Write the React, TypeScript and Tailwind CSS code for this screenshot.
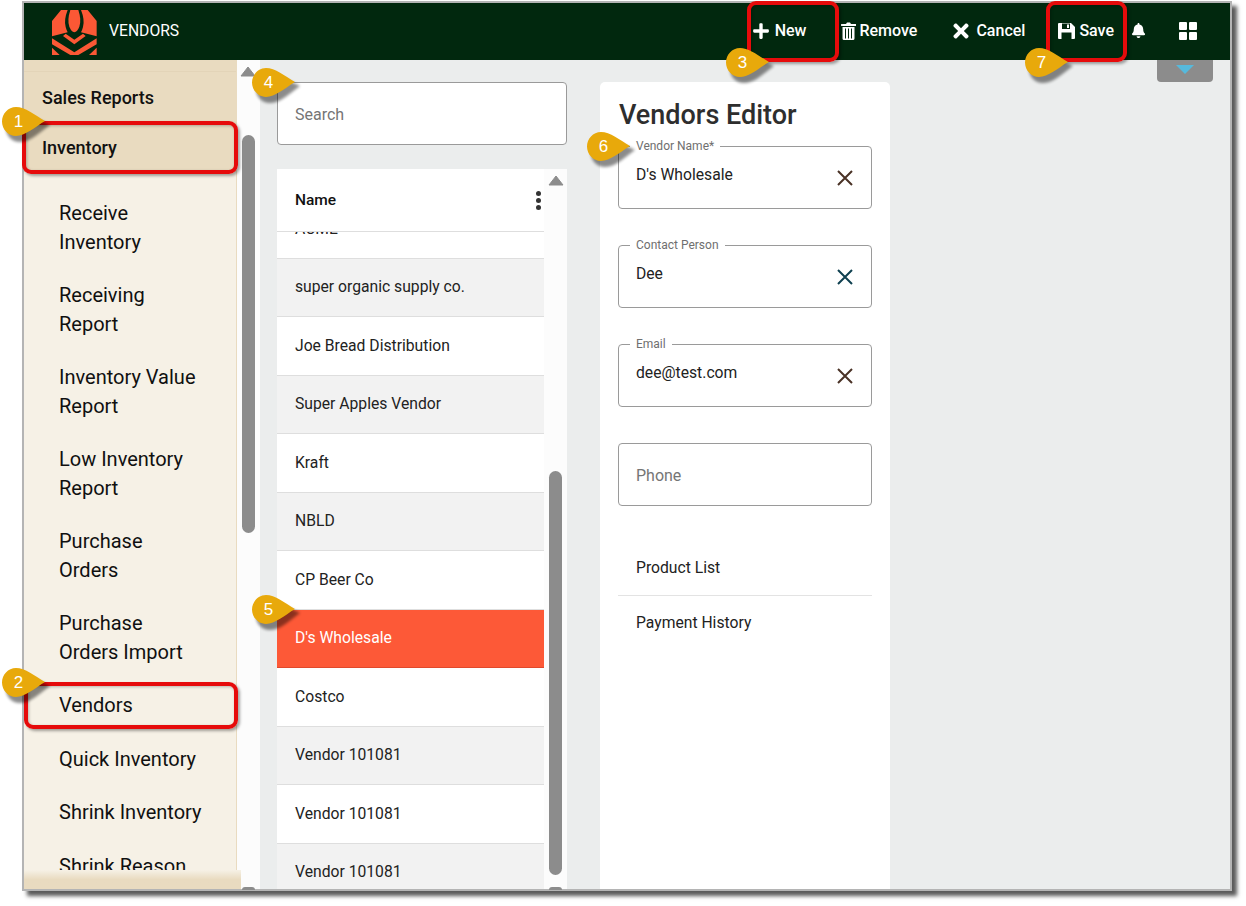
import React from "react";
import { FaPlus, FaTimes, FaBell } from "react-icons/fa";

function Logo() {
  return (
    <svg width="60" height="54" viewBox="0 0 180 162" className="ml-[21px] shrink-0" fill="#fb5835">
      <path d="M76 15 H100 Q110 45 103 65 Q97 80 88 82 Q79 80 73 65 Q66 45 76 15Z" />
      <path d="M48 15 H68 Q56 45 62 66 Q64 74 68 82 L21 94 V48Z" />
      <path d="M128 15 H108 Q120 45 114 66 Q112 74 108 82 L155 94 V48Z" />
      <path d="M62 86 L88 104 L114 86 L122 93 L88 118 L54 93Z" />
      <path d="M21 100 L88 142 L155 100 V118 L100 150 H76 L21 118Z" />
      <path d="M21 128 L44 150 H21Z" />
      <path d="M155 128 L132 150 H155Z" />
    </svg>
  );
}

function SaveIcon() {
  return (
    <svg width="17" height="16" viewBox="0 0 17 16" fill="#fff" className="shrink-0">
      <path
        fillRule="evenodd"
        d="M0 1 Q0 0 1 0 H13 L17 4 V15 Q17 16 16 16 H1 Q0 16 0 15Z M4 0.5 V6 H12 V0.5Z M3.5 9.5 V16 H13.5 V9.5Z"
      />
      <rect x="9" y="1.5" width="2" height="3.5" />
    </svg>
  );
}

function TrashIcon() {
  return (
    <svg width="15" height="18" viewBox="0 0 15 18" fill="#fff" className="shrink-0">
      <path d="M5 2 L6 0.5 H9 L10 2 H15 V4 H0 V2Z" />
      <path
        fillRule="evenodd"
        d="M1.5 5 H13.5 V16.5 Q13.5 18 12 18 H3 Q1.5 18 1.5 16.5Z M4 6.5 V16.5 H5 V6.5Z M7 6.5 V16.5 H8 V6.5Z M10 6.5 V16.5 H11 V6.5Z"
      />
    </svg>
  );
}

function TopAction({ icon, label, gap }: { icon: React.ReactNode; label: string; gap: string }) {
  return (
    <div className={`flex items-center text-[16px] text-white font-medium ${gap}`}>
      {icon}
      <span>{label}</span>
    </div>
  );
}

function Badge({ n, x, y }: { n: number; x: number; y: number }) {
  return (
    <div className="absolute z-30 w-[48px] h-[36px]" style={{ left: x, top: y }}>
      <svg width="52" height="38" viewBox="0 0 52 38" className="absolute left-0 top-0">
        <path d="M15 3 C24 3 34 9 45 14 C36 20 26 31 15 31 C7 31 1 25 1 17 C1 9 7 3 15 3Z" fill="#000" opacity="0.45" transform="translate(4 4)" className="blur-[1.5px]" />
        <path d="M15 0 C24 0 34 8 44 14 C34 20 24 29 15 29 C7 29 1 22 1 14.5 C1 7 7 0 15 0Z" fill="#e8a90b" />
      </svg>
      <span className="absolute left-0 top-0 w-[35px] h-[29px] flex items-center justify-center text-white text-[17px] font-['Liberation_Sans',sans-serif]">{n}</span>
    </div>
  );
}

function RedBox({ x, y, w, h }: { x: number; y: number; w: number; h: number }) {
  return (
    <div
      className="absolute z-20 border-[4.5px] border-[#e60b0b] rounded-[9px] shadow-[2px_2px_3px_rgba(0,0,0,0.35),inset_1px_1px_3px_rgba(0,0,0,0.25)]"
      style={{ left: x, top: y, width: w, height: h }}
    />
  );
}

function SideItem({ lines }: { lines: string[] }) {
  return (
    <div className="pl-[35px] py-[12px] text-[20px] leading-[29px] text-[#101010]">
      {lines.map((l) => (
        <div key={l}>{l}</div>
      ))}
    </div>
  );
}

function SideSingle({ label }: { label: string }) {
  return <div className="pl-[35px] h-[53.5px] pt-[12px] text-[20px] leading-[29px] text-[#101010]">{label}</div>;
}

function Triangle({ color = "#8c8c8c", cls = "" }: { color?: string; cls?: string }) {
  return (
    <svg width="16" height="11" viewBox="0 0 16 11" className={cls}>
      <path d="M8 1 L15 10 H1Z" fill={color} stroke={color} strokeLinejoin="round" />
    </svg>
  );
}

function Field({ label, value, xColor }: { label: string; value: string; xColor: string }) {
  return (
    <div className="relative h-[63px] border border-[#9a9a9a] rounded-[4px] pl-[17px] pt-[17px] text-[15.7px] leading-[21px] text-[#222]">
      <span className="absolute left-[11px] -top-[8px] bg-white px-[6px] text-[12px] leading-[14px] text-[#6f6f6f]">{label}</span>
      {value}
      <svg width="20" height="20" viewBox="0 0 20 20" className="absolute right-[16px] top-[21px]" stroke={xColor} strokeWidth="2" fill="none">
        <path d="M3 3 L17 17 M17 3 L3 17" />
      </svg>
    </div>
  );
}

const rows = [
  "ACME",
  "super organic supply co.",
  "Joe Bread Distribution",
  "Super Apples Vendor",
  "Kraft",
  "NBLD",
  "CP Beer Co",
  "D's Wholesale",
  "Costco",
  "Vendor 101081",
  "Vendor 101081",
  "Vendor 101081",
];

export default function App() {
  return (
    <div className="relative w-[1246px] h-[906px] bg-white overflow-hidden font-['Roboto',sans-serif] pl-[22px] pt-[1px]">
      <div className="w-[1210px] h-[890px] border-2 border-[#b4b4b4] shadow-[5px_5px_4px_rgba(0,0,0,0.65)] flex flex-col bg-[#ebeded]">
        <header className="h-[57px] shrink-0 bg-[#01280e] flex items-center">
          <Logo />
          <span className="ml-[4px] mb-[2px] text-[15.7px] text-white">VENDORS</span>
          <div className="ml-auto flex items-center pr-[33px] pb-[2px]">
            <TopAction gap="gap-[5px]" icon={<FaPlus className="text-[18px]" />} label="New" />
            <div className="ml-[35px]">
              <TopAction gap="gap-[3px]" icon={<TrashIcon />} label="Remove" />
            </div>
            <div className="ml-[33px]">
              <TopAction gap="gap-[4px]" icon={<FaTimes className="text-[22px]" />} label="Cancel" />
            </div>
            <div className="ml-[33px]">
              <TopAction gap="gap-[4px]" icon={<SaveIcon />} label="Save" />
            </div>
            <FaBell className="ml-[17px] text-white text-[15px]" />
            <svg width="18" height="18" viewBox="0 0 18 18" fill="#fff" className="ml-[33px]">
              <rect x="0" y="0" width="8" height="8" rx="1" />
              <rect x="10" y="0" width="8" height="8" rx="1" />
              <rect x="0" y="10" width="8" height="8" rx="1" />
              <rect x="10" y="10" width="8" height="8" rx="1" />
            </svg>
          </div>
        </header>
        <div className="flex flex-1 min-h-0">
          {/* sidebar */}
          <aside className="relative w-[213px] shrink-0 bg-[#f6f1e6] border-r border-[#e9dbc0] overflow-visible">
            <div className="h-[12px] bg-[#e9dbc0] border-b border-[#e3d4b8]" />
            <div className="bg-[#e9dbc0] text-[18px] font-medium text-[#111] pl-[18px]">
              <div className="h-[50px] leading-[51px]">Sales Reports</div>
              <div className="h-[50px] leading-[51px]">Inventory</div>
            </div>
            <div className="pt-[15px] h-[707px] overflow-hidden">
              <SideItem lines={["Receive", "Inventory"]} />
              <SideItem lines={["Receiving", "Report"]} />
              <SideItem lines={["Inventory Value", "Report"]} />
              <SideItem lines={["Low Inventory", "Report"]} />
              <SideItem lines={["Purchase", "Orders"]} />
              <SideItem lines={["Purchase", "Orders Import"]} />
              <SideSingle label="Vendors" />
              <SideSingle label="Quick Inventory" />
              <SideSingle label="Shrink Inventory" />
              <SideSingle label="Shrink Reason" />
            </div>
            <div className="absolute left-0 bottom-0 w-[217px] h-[19px] bg-gradient-to-b from-[#f6f1e6] via-[#e9dbc0] to-[#e9dbc0] z-10" />
          </aside>
          {/* sidebar scrollbar */}
          <div className="relative w-[23px] shrink-0 bg-[#fcfcfc]">
            <Triangle cls="absolute left-[3px] top-[6px]" />
            <div className="absolute left-[5px] top-[75px] w-[13px] h-[398px] bg-[#8c8c8c] rounded-[7px]" />
            <div className="absolute left-[5px] -bottom-[1px] w-[13px] h-[3px] bg-[#8c8c8c] rounded-t-[3px]" />
          </div>
          {/* list column */}
          <div className="w-[290px] ml-[17px] mt-[22px] shrink-0 flex flex-col">
            <div className="h-[63px] bg-white border border-[#9a9a9a] rounded-[4px] flex items-center pl-[17px] pt-[2px] text-[16px] text-[#757575] shrink-0">
              Search
            </div>
            <div className="mt-[24px] flex-1 min-h-0 flex bg-white">
              <div className="flex-1 min-w-0 flex flex-col">
                <div className="h-[63px] shrink-0 border-b border-[#dedede] flex items-center justify-between pl-[18px] pt-[2px] text-[15.5px] font-medium text-[#111] relative z-10 bg-white">
                  Name
                  <span className="flex flex-col gap-[2px] mr-[3px] -mt-[2px]">
                    <i className="block w-[5px] h-[5px] rounded-full bg-[#333]" />
                    <i className="block w-[5px] h-[5px] rounded-full bg-[#333]" />
                    <i className="block w-[5px] h-[5px] rounded-full bg-[#333]" />
                  </span>
                </div>
                <div className="flex-1 min-h-0 overflow-hidden">
                  <div className="-mt-[32px]">
                    {rows.map((r, i) => {
                      const active = r === "D's Wholesale";
                      return (
                        <div
                          key={i}
                          className={`h-[58.5px] flex items-center pl-[18px] text-[15.7px] border-b ${
                            active
                              ? "bg-[#fd5937] text-white border-[#e0492c]"
                              : i % 2 === 1
                                ? "bg-[#f2f2f2] text-[#222] border-[#dedede]"
                                : "bg-white text-[#222] border-[#dedede]"
                          }`}
                        >
                          {r}
                        </div>
                      );
                    })}
                  </div>
                </div>
              </div>
              <div className="relative w-[23px] shrink-0 bg-[#fcfcfc]">
                <Triangle cls="absolute left-[4px] top-[6px]" />
                <div className="absolute left-[5px] top-[302px] w-[13px] h-[404px] bg-[#8c8c8c] rounded-[7px]" />
                <div className="absolute left-[5px] -bottom-[1px] w-[13px] h-[3px] bg-[#8c8c8c] rounded-t-[3px]" />
              </div>
            </div>
          </div>
          {/* editor */}
          <div className="w-[290px] ml-[33px] mt-[22px] shrink-0 bg-white rounded-t-[5px] px-[18px] pt-[16px]">
            <h1 className="text-[27px] leading-[34px] font-medium text-[#2e2e2e] pl-[1px]">Vendors Editor</h1>
            <div className="mt-[14px] flex flex-col gap-[36px]">
              <Field label="Vendor Name*" value="D's Wholesale" xColor="#4a3226" />
              <Field label="Contact Person" value="Dee" xColor="#0f4050" />
              <Field label="Email" value="dee@test.com" xColor="#4a3226" />
              <div className="h-[63px] border border-[#9a9a9a] rounded-[4px] flex items-center pl-[17px] pt-[2px] text-[16px] text-[#757575]">Phone</div>
            </div>
            <div className="mt-[33px] h-[57px] border-b border-[#e3e3e3] pl-[18px] pt-[18px] text-[15.7px] leading-[21px] text-[#222]">Product List</div>
            <div className="pl-[18px] pt-[16px] text-[15.7px] leading-[21px] text-[#222]">Payment History</div>
          </div>
          <div className="flex-1 relative">
            <div className="absolute left-[267px] top-0 w-[56px] h-[22px] bg-[#8c8c8c] rounded-b-[4px] flex justify-center pt-[5px]">
              <svg width="18" height="9" viewBox="0 0 18 9"><path d="M0 0 H18 L9 9Z" fill="#56b9dc" /></svg>
            </div>
          </div>
        </div>
      </div>
      <RedBox x={22} y={121} w={216} h={53} />
      <RedBox x={24} y={682} w={214} h={47} />
      <RedBox x={747} y={1} w={92} h={61} />
      <RedBox x={1046} y={1} w={81} h={61} />
      <Badge n={1} x={1} y={107} />
      <Badge n={2} x={1} y={668} />
      <Badge n={3} x={725} y={48} />
      <Badge n={4} x={251} y={68} />
      <Badge n={5} x={251} y={595} />
      <Badge n={6} x={586} y={132} />
      <Badge n={7} x={1024} y={48} />
    </div>
  );
}
